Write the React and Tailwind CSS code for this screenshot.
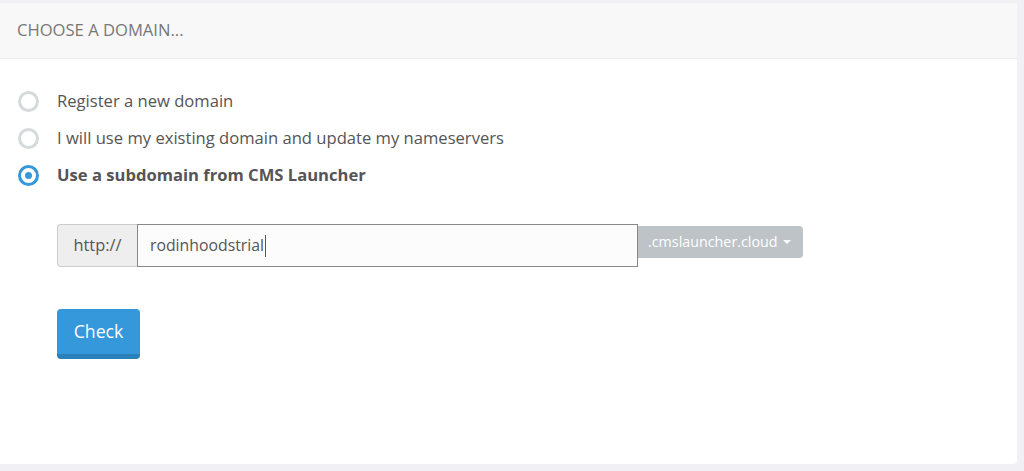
const options = [
  { label: 'Register a new domain', checked: false },
  { label: 'I will use my existing domain and update my nameservers', checked: false },
  { label: 'Use a subdomain from CMS Launcher', checked: true },
];

const Radio = ({ checked }) => (
  <span
    className={
      'flex h-[21px] w-[21px] items-center justify-center rounded-full border-[3px] ' +
      (checked ? 'border-[#3498db]' : 'border-[#d5dadd]')
    }
  >
    {checked && <span className="h-[7px] w-[7px] rounded-full bg-[#3498db]" />}
  </span>
);

const App = () => {
  return (
    <div
      className="min-h-[471px] bg-[#f0f0f5] pt-[3px] pr-[7px] pb-[7px]"
      style={{ fontFamily: '"Open Sans", sans-serif' }}
    >
      <div className="h-[461px] rounded-br bg-white">
        {/* Header */}
        <div className="flex h-[56px] items-center border-b border-[#ececec] bg-[#f8f8f8] px-[17px]">
          <span className="text-[16.6px] uppercase text-[#777]">Choose a domain...</span>
        </div>

        {/* Options */}
        <div className="flex flex-col gap-[16px] pt-[32px] pl-[18px]">
          {options.map(opt => (
            <label key={opt.label} className="flex h-[21px] items-center gap-[18px]">
              <Radio checked={opt.checked} />
              <span
                className={
                  'text-[16.6px] text-[#555] ' + (opt.checked ? 'font-bold' : '')
                }
              >
                {opt.label}
              </span>
            </label>
          ))}
        </div>

        {/* Subdomain input */}
        <div className="mt-[38px] flex items-start pl-[57px]">
          <div className="flex h-[43px] w-[80px] items-center justify-center rounded-l border border-r-0 border-[#ccc] bg-[#eee] text-[16.4px] text-[#555]">
            http://
          </div>
          <div className="flex h-[43px] w-[501px] items-center border border-[#888] bg-[#fcfcfc] pl-[12px] text-[15.8px] text-[#555]">
            rodinhoodstrial
            <span className="ml-[1px] h-[22px] w-px bg-[#555]" />
          </div>
          <button className="mt-[2px] flex h-[32px] items-center gap-[5px] rounded-r bg-[#bdc3c7] pr-[12px] pl-[10px] text-[14.3px] text-white">
            .cmslauncher.cloud
            <svg width="8" height="5" viewBox="0 0 8 5">
              <path d="M0 0 L8 0 L4 4 Z" fill="#fff" />
            </svg>
          </button>
        </div>

        {/* Check button */}
        <div className="mt-[42px] pl-[57px]">
          <button className="h-[50px] w-[83px] rounded border-b-[5px] border-[#2a80b9] bg-[#3498db] text-[17.7px] text-white">
            Check
          </button>
        </div>
      </div>
    </div>
  );
};

export default App;
